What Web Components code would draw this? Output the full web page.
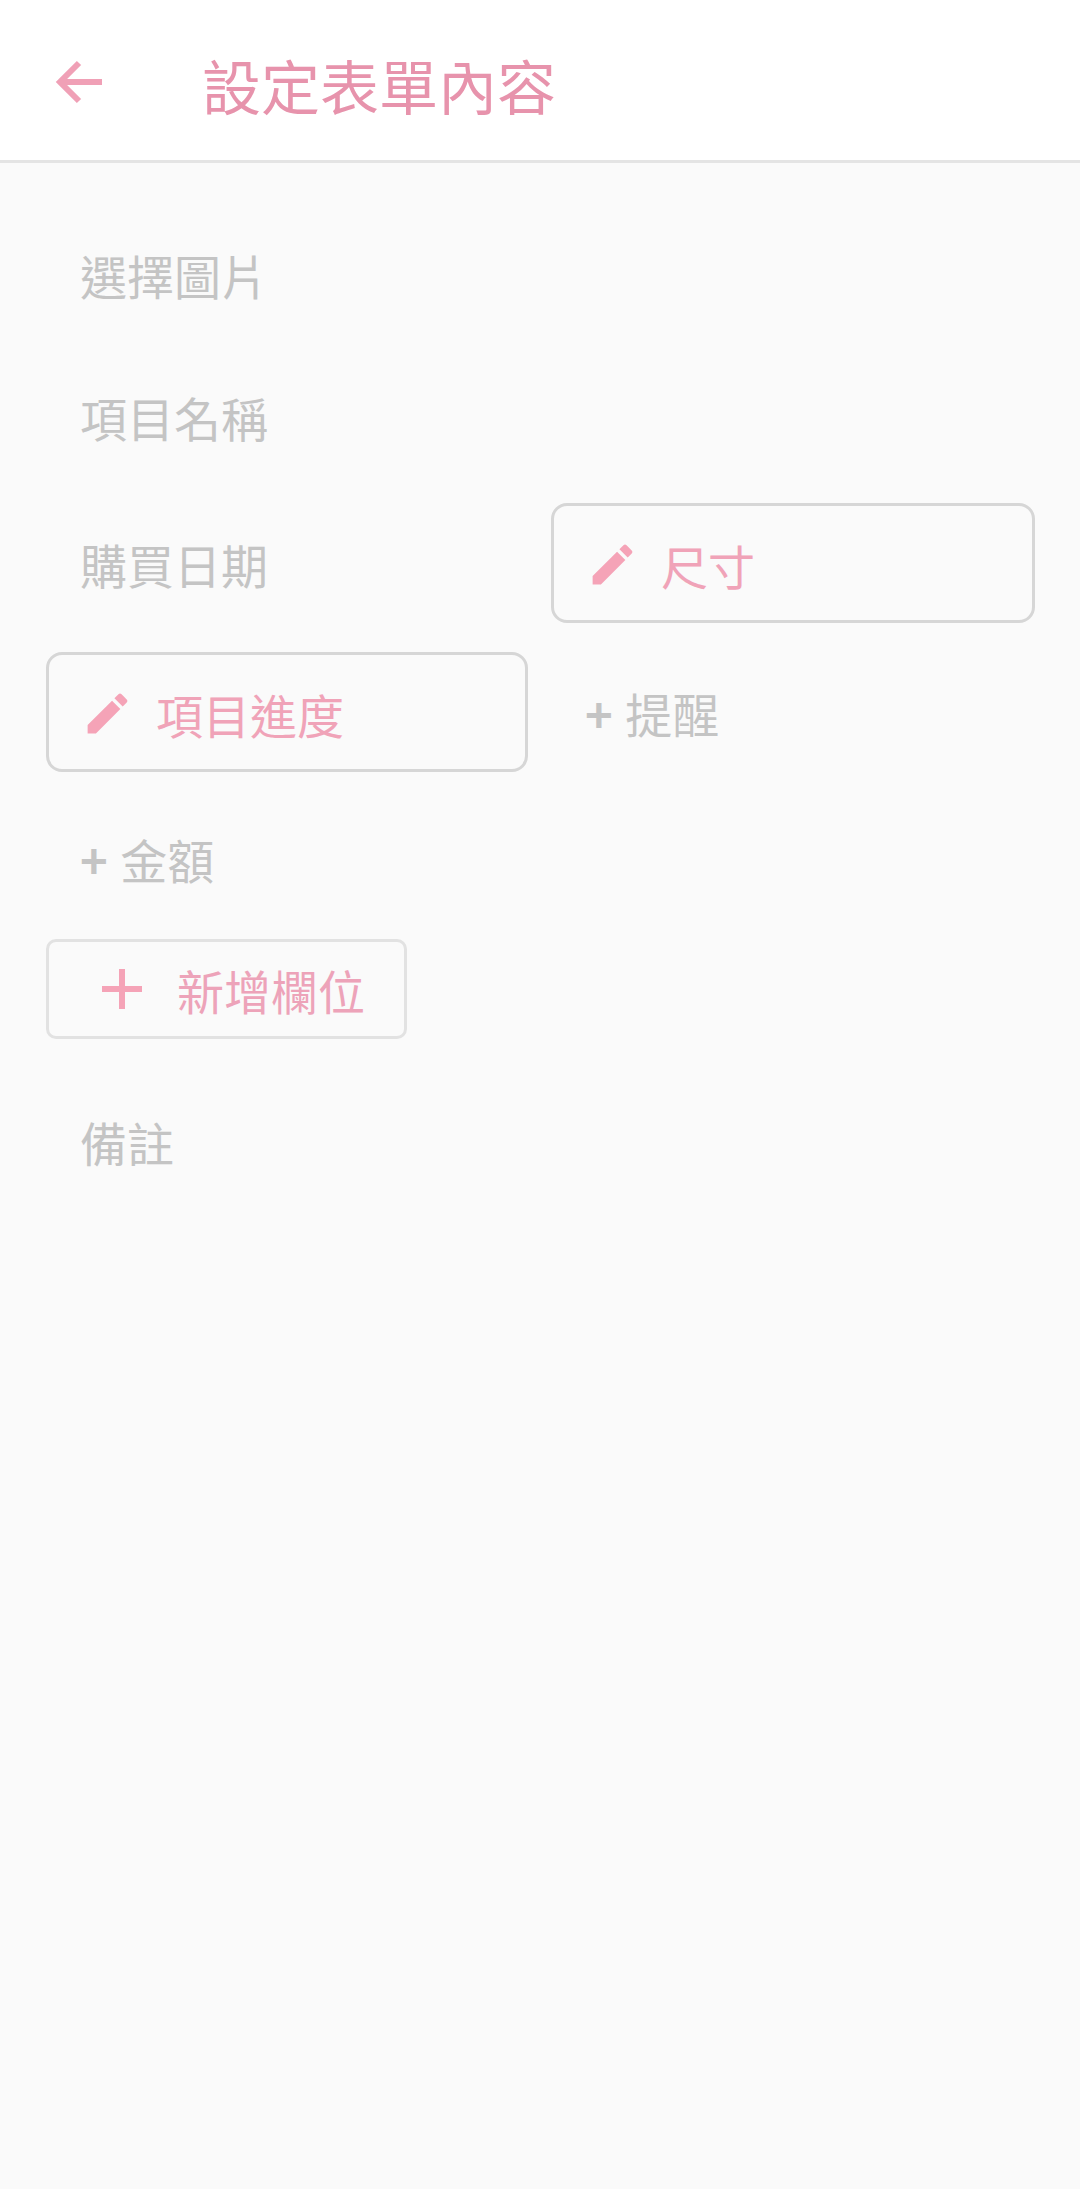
<!DOCTYPE html>
<html lang="zh-Hant">
<head>
<meta charset="utf-8">
<title>設定表單內容</title>
<style>
    html, body {
        margin: 0;
        height: 100%;
        background: #fafafa;
        font-family: "Noto Sans CJK TC", "Noto Sans", sans-serif;
    }
    .plus {
        font-weight: 700;
        margin-right: 2px;
    }
</style>
</head>
<body>
<app-bar>設定表單內容</app-bar>
<form-layout>
    <plain-field>選擇圖片</plain-field>
    <plain-field wide>項目名稱</plain-field>
    <plain-field>購買日期</plain-field>
    <edit-field>尺寸</edit-field>
    <edit-field>項目進度</edit-field>
    <plain-field><span><span class="plus">+</span> 提醒</span></plain-field>
    <plain-field wide><span><span class="plus">+</span> 金額</span></plain-field>
    <add-button>新增欄位</add-button>
    <plain-field wide>備註</plain-field>
</form-layout>

<script>
class AppBar extends HTMLElement {
    constructor() {
        super();
        this.attachShadow({ mode: 'open' });
        this.shadowRoot.innerHTML = `
        <style>
            :host {
                display: flex;
                align-items: center;
                height: 160px;
                background: #fff;
                border-bottom: 3px solid #e4e4e4;
                color: #e793ac;
                font-size: 59px;
            }
            svg {
                width: 64px;
                height: 64px;
                margin: 4px 0 0 47px;
                flex: none;
            }
            span {
                margin-left: 91px;
                padding-top: 8px;
                line-height: 1;
            }
        </style>
        <svg viewBox="0 0 64 64" fill="none" stroke="#f0a0b6" stroke-width="6">
            <path d="M55 32H15M32 13L13 32l19 19"/>
        </svg>
        <span><slot></slot></span>
        `;
    }
}

class FormLayout extends HTMLElement {
    constructor() {
        super();
        this.attachShadow({ mode: 'open' });
        this.shadowRoot.innerHTML = `
        <style>
            :host {
                display: grid;
                grid-template-columns: 482px 484px;
                grid-template-rows: 142px 147px 149px 146px 141px 142px 120px;
                column-gap: 23px;
                align-items: start;
                padding: 51px 46px 0;
            }
        </style>
        <slot></slot>
        `;
    }
}

class PlainField extends HTMLElement {
    constructor() {
        super();
        this.attachShadow({ mode: 'open' });
        this.shadowRoot.innerHTML = `
        <style>
            :host {
                display: flex;
                align-items: center;
                height: 120px;
                padding-left: 34px;
                color: #c4c4c4;
                font-size: 47px;
            }
            :host([wide]) {
                grid-column: 1 / -1;
            }
        </style>
        <slot></slot>
        `;
    }
}

class EditField extends HTMLElement {
    constructor() {
        super();
        this.attachShadow({ mode: 'open' });
        this.shadowRoot.innerHTML = `
        <style>
            :host {
                display: flex;
                align-items: center;
                box-sizing: border-box;
                height: 120px;
                padding-left: 32px;
                border: 3px solid #d6d6d6;
                border-radius: 16px;
                color: #f0a3b8;
                font-size: 47px;
            }
            svg {
                width: 53px;
                height: 53px;
                margin: 2px 22px 0 0;
                flex: none;
            }
            span {
                padding-top: 3px;
            }
        </style>
        <svg viewBox="0 0 24 24" fill="#f5a3b7">
            <path d="M3 17.25V21h3.75L17.81 9.94l-3.75-3.75L3 17.25zM20.71 7.04a1 1 0 0 0 0-1.41l-2.34-2.34a1 1 0 0 0-1.41 0l-1.83 1.83 3.75 3.75 1.83-1.83z"/>
        </svg>
        <span><slot></slot></span>
        `;
    }
}

class AddButton extends HTMLElement {
    constructor() {
        super();
        this.attachShadow({ mode: 'open' });
        this.shadowRoot.innerHTML = `
        <style>
            :host {
                display: flex;
                align-items: center;
                box-sizing: border-box;
                grid-column: 1 / -1;
                width: 361px;
                height: 100px;
                padding-left: 53px;
                border: 3px solid #e2e2e2;
                border-radius: 10px;
                color: #eda3b9;
                font-size: 47px;
            }
            svg {
                width: 40px;
                height: 40px;
                margin-right: 35px;
                flex: none;
            }
        </style>
        <svg viewBox="0 0 40 40" fill="none" stroke="#f5a3b7" stroke-width="6">
            <path d="M0 20h40M20 0v40"/>
        </svg>
        <slot></slot>
        `;
    }
}

customElements.define('app-bar', AppBar);
customElements.define('form-layout', FormLayout);
customElements.define('plain-field', PlainField);
customElements.define('edit-field', EditField);
customElements.define('add-button', AddButton);
</script>
</body>
</html>
